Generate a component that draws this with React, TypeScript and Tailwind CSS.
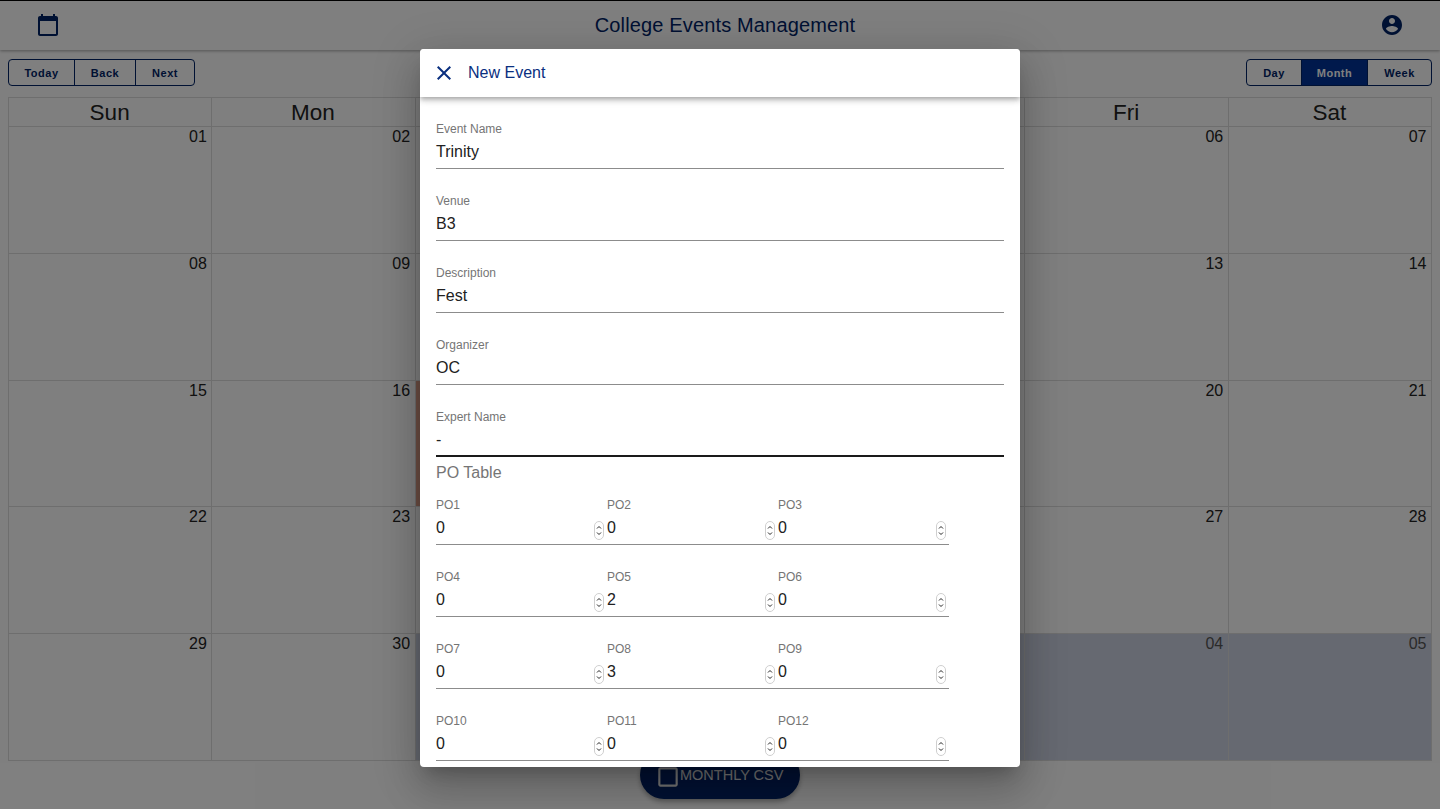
const NAVY = "text-[#002366]";

function Spinner() {
  return (
    <svg width="10" height="19" viewBox="0 0 10 19" className="shrink-0 block">
      <rect x="0.5" y="0.5" width="9" height="18" rx="4.5" fill="#fff" stroke="#cfcfcf" />
      <path d="M3 7.5 5 5.5 7 7.5M3 11.5 5 13.5 7 11.5" fill="none" stroke="#222" strokeWidth="1" />
    </svg>
  );
}

function Field({ label, value, focused }: { label: string; value: string; focused?: boolean }) {
  return (
    <div className={`h-[48px] flex flex-col ${focused ? "border-b-2 border-[#1a1a1a]" : "border-b border-[#8c8c8c]"}`}>
      <div className="text-[12px] leading-[16px] text-[#757575]">{label}</div>
      <div className="text-[16px] leading-[30px] text-[#212121]">{value}</div>
    </div>
  );
}

function PoField({ label, value }: { label: string; value: string }) {
  return (
    <div className="h-[48px] flex flex-col border-b border-[#8c8c8c]">
      <div className="text-[12px] leading-[16px] text-[#757575]">{label}</div>
      <div className="flex items-center justify-between h-[31px] pr-[3px]">
        <span className="text-[16px] leading-[18px] mb-[2px] text-[#212121]">{value}</span>
        <span className="mt-[4px]"><Spinner /></span>
      </div>
    </div>
  );
}

// The Tue, Wed and Thu columns lie wholly behind the dialog, so their cells carry no text.
const weeks = [
  ["01", "02", "", "", "", "06", "07"],
  ["08", "09", "", "", "", "13", "14"],
  ["15", "16", "", "", "", "20", "21"],
  ["22", "23", "", "", "", "27", "28"],
  ["29", "30", "", "", "", "04", "05"],
];

const days = ["Sun", "Mon", "", "", "", "Fri", "Sat"];

const po = [
  ["PO1", "0"], ["PO2", "0"], ["PO3", "0"],
  ["PO4", "0"], ["PO5", "2"], ["PO6", "0"],
  ["PO7", "0"], ["PO8", "3"], ["PO9", "0"],
  ["PO10", "0"], ["PO11", "0"], ["PO12", "0"],
];

function ToolButton({ label, active, w, first, last }: { label: string; active?: boolean; w: string; first?: boolean; last?: boolean }) {
  return (
    <div
      className={`${w} h-[27px] pt-[1px] flex items-center justify-center text-[11px] font-bold tracking-[0.5px] border border-[#002366] ${first ? "rounded-l-[4px]" : "-ml-px"} ${last ? "rounded-r-[4px]" : ""} ${active ? "bg-[#003399] text-white" : NAVY}`}
    >
      {label}
    </div>
  );
}

export default function App() {
  return (
    <div className="relative w-[1440px] h-[809px] overflow-hidden bg-white font-['Liberation_Sans',Arial,sans-serif]">
      <header className="h-[50px] flex items-center justify-between border-t border-black pb-[1px] pl-[36px] pr-[36px] shadow-[0_1px_3px_rgba(0,0,0,0.35)] relative">
        <svg width="24" height="24" viewBox="0 0 24 24" fill="#002366">
          <path d="M20 3h-1V1h-2v2H7V1H5v2H4c-1.1 0-2 .9-2 2v16c0 1.1.9 2 2 2h16c1.1 0 2-.9 2-2V5c0-1.1-.9-2-2-2zm0 18H4V8h16v13z" />
        </svg>
        <div className={`ml-[10px] text-[20px] tracking-[0.15px] ${NAVY}`}>College Events Management</div>
        <svg width="24" height="24" viewBox="0 0 24 24" fill="#002366">
          <path d="M12 2C6.48 2 2 6.48 2 12s4.48 10 10 10 10-4.48 10-10S17.52 2 12 2zm0 3c1.66 0 3 1.34 3 3s-1.34 3-3 3-3-1.34-3-3 1.34-3 3-3zm0 14.2c-2.5 0-4.71-1.28-6-3.22.03-1.99 4-3.08 6-3.08 1.99 0 5.97 1.09 6 3.08-1.29 1.94-3.5 3.22-6 3.22z" />
        </svg>
      </header>

      <div className="px-[8px] pt-[9px] flex justify-between">
        <div className="flex">
          <ToolButton label="Today" w="w-[67px]" first />
          <ToolButton label="Back" w="w-[62px]" />
          <ToolButton label="Next" w="w-[60px]" last />
        </div>
        <div className="flex">
          <ToolButton label="Day" w="w-[56px]" first />
          <ToolButton label="Month" w="w-[67px]" active />
          <ToolButton label="Week" w="w-[65px]" last />
        </div>
      </div>

      <div className="mx-[8px] mt-[11px] border-t border-l border-[#dddddd]">
        <div className="grid grid-cols-7 h-[29px]">
          {days.map((d, i) => (
            <div key={i} className="border-r border-b border-[#dddddd] text-center pr-[1px] text-[22.5px] leading-[30px] h-[29px] overflow-hidden text-[#222222]">
              {d}
            </div>
          ))}
        </div>
        <div className="grid grid-cols-7 grid-rows-5 h-[634px]">
          {weeks.map((week, r) =>
            week.map((date, c) => {
              const off = r === 4 && c >= 2;
              const ev = r === 2 && c === 2;
              return (
                <div
                  key={`${r}-${c}`}
                  className={`border-r border-b border-[#dddddd] text-right pr-[4.5px] pt-[1px] text-[16px] leading-[18px] ${off ? "bg-[#cdd3e3] text-[#555555]" : "text-[#222222]"} ${ev ? "bg-[#d99c86]" : ""}`}
                >
                  {date}
                </div>
              );
            })
          )}
        </div>
      </div>

      <div className="relative -mt-[10px] flex justify-center">
        <div className="w-[160px] h-[48px] rounded-[24px] bg-[#002366] shadow-[0_3px_5px_rgba(0,0,0,0.3)] flex items-center pl-[15px] text-[#e6e6e6] text-[14.5px]">
          <svg width="26" height="26" viewBox="0 0 24 24" fill="currentColor" className="shrink-0 mt-[3px]">
            <path d="M19 5v14H5V5h14m0-2H5c-1.1 0-2 .9-2 2v14c0 1.1.9 2 2 2h14c1.1 0 2-.9 2-2V5c0-1.1-.9-2-2-2z" />
          </svg>
          <span className="-ml-[1px] mt-[1px]">MONTHLY CSV</span>
        </div>
      </div>

      <div className="absolute inset-0 bg-black/50 flex items-start justify-center pt-[49px]">
        <div className="w-[600px] h-[718px] bg-white rounded-[4px] overflow-hidden flex flex-col shadow-[0_11px_15px_-7px_rgba(0,0,0,0.2),0_24px_38px_3px_rgba(0,0,0,0.14),0_9px_46px_8px_rgba(0,0,0,0.12)]">
          <div className="relative h-[48px] shrink-0 flex items-center pl-[16px] bg-white shadow-[0_2px_4px_-1px_rgba(0,0,0,0.2),0_4px_5px_rgba(0,0,0,0.14),0_1px_10px_rgba(0,0,0,0.12)]">
            <svg width="24" height="24" viewBox="0 0 24 24" fill="#0a2f7f" className="-ml-[4px]">
              <path d="M19 6.41L17.59 5 12 10.59 6.41 5 5 6.41 10.59 12 5 17.59 6.41 19 12 13.41 17.59 19 19 17.59 13.41 12z" />
            </svg>
            <div className="ml-[12px] text-[16px] text-[#0a2f7f]">New Event</div>
          </div>
          <div className="flex-1 px-[16px] pt-[24px] flex flex-col gap-[24px] overflow-hidden">
            <Field label="Event Name" value="Trinity" />
            <Field label="Venue" value="B3" />
            <Field label="Description" value="Fest" />
            <Field label="Organizer" value="OC" />
            <div className="-mb-[8px]">
              <Field label="Expert Name" value="-" focused />
              <div className="mt-[7px] text-[16px] leading-[18px] text-[#757575]">PO Table</div>
            </div>
            <div className="grid grid-cols-[171px_171px_171px] gap-y-[24px] -mt-[1px]">
              {po.map(([l, v]) => (
                <PoField key={l} label={l} value={v} />
              ))}
            </div>
          </div>
        </div>
      </div>
    </div>
  );
}
